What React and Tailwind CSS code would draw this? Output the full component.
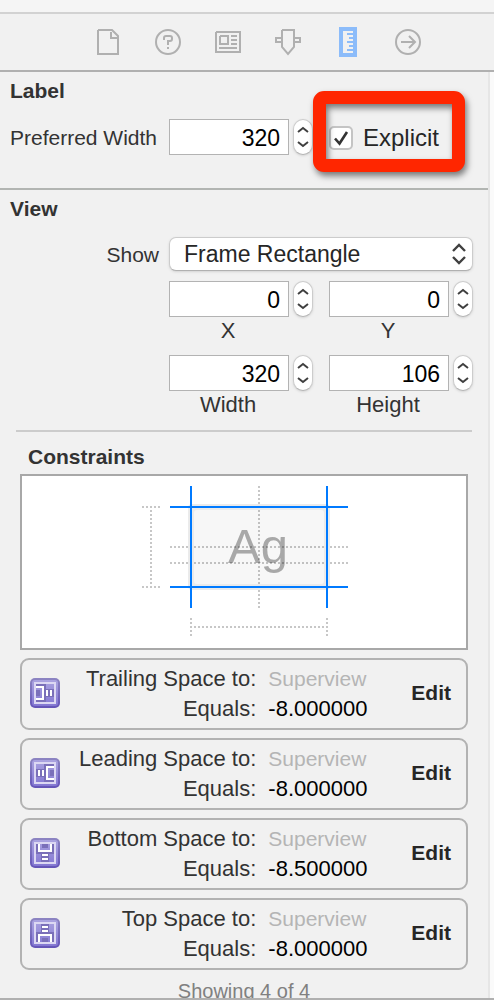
import { useState } from "react";

const toolbarItems = [
  {
    label: "File inspector",
    drawing: (
      <path d="M5 3h14l6 6v18H5V3M18 5v6h6" />
    ),
  },
  {
    label: "Quick help",
    drawing: (
      <>
        <circle cx="15" cy="15" r="12" />
        <path d="M11 13v-2a2 2 0 0 1 2-2h4a2 2 0 0 1 2 2v1a2 2 0 0 1-2 2h-2v4M15 20v2" />
      </>
    ),
  },
  {
    label: "Identity inspector",
    drawing: (
      <path d="M3 5h24v20H3V5M7 9h8v8H7V9M18 9h6M18 13h6M18 17h6M6 21h18" />
    ),
  },
  {
    label: "Attributes inspector",
    drawing: (
      <path d="M9 3h12v17l-6 7-6-7V3M9 11H3v4h6M21 11h6v4h-6" />
    ),
  },
  {
    label: "Size inspector",
    active: true,
    drawing: (
      <>
        <rect x="6" y="0" width="18" height="30" fill="#8cbcfa" stroke="none" />
        <path
          d="M10 4h10v2h-6v2h6v2h-4v2h4v2h-6v2h6v2h-4v2h4v2h-6v2h6v2H10Z"
          fill="#f1f1f1"
          stroke="none"
        />
      </>
    ),
  },
  {
    label: "Connections inspector",
    drawing: (
      <>
        <circle cx="15" cy="15" r="12" />
        <path d="M8 15h14M16 9l6 6-6 6" />
      </>
    ),
  },
];

const constraints = [
  { name: "Trailing Space to:", value: "-8.000000", angle: 0 },
  { name: "Leading Space to:", value: "-8.000000", angle: 180 },
  { name: "Bottom Space to:", value: "-8.500000", angle: 90 },
  { name: "Top Space to:", value: "-8.000000", angle: 270 },
];

function Stepper({ label, onStep }) {
  return (
    <div className="flex h-9 w-5 shrink-0 flex-col overflow-hidden rounded-full border border-[#cccccc] border-b-[#b4b4b4] bg-white shadow-sm">
      <button
        type="button"
        aria-label={`Increase ${label}`}
        onClick={() => onStep(1)}
        className="flex flex-1 items-center justify-center pt-0.5"
      >
        <svg width="12" height="7" viewBox="0 0 12 7" fill="none" stroke="#404040" strokeWidth="2">
          <path d="M1 6l5-4 5 4" />
        </svg>
      </button>
      <button
        type="button"
        aria-label={`Decrease ${label}`}
        onClick={() => onStep(-1)}
        className="flex flex-1 items-center justify-center pb-0.5"
      >
        <svg width="12" height="7" viewBox="0 0 12 7" fill="none" stroke="#404040" strokeWidth="2">
          <path d="M1 1l5 4 5-4" />
        </svg>
      </button>
    </div>
  );
}

function NumberField({ id, label, initial, caption }) {
  const [value, setValue] = useState(initial);
  return (
    <div className="min-w-0 flex-1">
      <div className="flex gap-1">
        <input
          id={id}
          type="text"
          inputMode="numeric"
          value={value}
          onChange={(e) => setValue(e.target.value)}
          className="h-9 w-full min-w-0 flex-1 border border-[#b3b3b3] bg-white px-2 pt-0.5 text-right text-[23px] text-black outline-none"
        />
        <Stepper label={label} onStep={(d) => setValue(String(Number(value) + d))} />
      </div>
      {caption && (
        <label htmlFor={id} className="mr-[26px] block pt-0.5 text-center text-[22px] leading-6">
          {caption}
        </label>
      )}
    </div>
  );
}

function ConstraintIcon({ angle }) {
  return (
    <svg width="30" height="30" viewBox="0 0 30 30" className="shrink-0" aria-hidden="true">
      <defs>
        <linearGradient id={`edge${angle}`} x1="0" y1="0" x2="0" y2="1">
          <stop offset="0" stopColor="#8d85c2" />
          <stop offset="1" stopColor="#6454b8" />
        </linearGradient>
        <linearGradient id={`face${angle}`} x1="0" y1="0" x2="0" y2="1">
          <stop offset="0" stopColor="#aaa3e0" />
          <stop offset="1" stopColor="#8377d2" />
        </linearGradient>
      </defs>
      <rect width="30" height="30" rx="5" fill={`url(#edge${angle})`} />
      <rect x="2" y="2" width="26" height="26" rx="3" fill={`url(#face${angle})`} />
      <rect x="5" y="5" width="20" height="20" fill="none" stroke="#dcd8f3" strokeWidth="2" />
      <g transform={`rotate(${angle} 15 15)`}>
        <path d="M6 6h10v5h8v8h-8v5H6v-4h6V10H6Z" fill="#7a6fb9" />
        <path d="M6 12h4v6H6Z" fill="#7a6fb9" />
        <path d="M6 8h8v14H6v-2h6V10H6ZM16 12h2v6h-2ZM20 12h2v6h-2Z" fill="#ffffff" />
      </g>
    </svg>
  );
}

function LayoutDiagram() {
  return (
    <svg
      width="208"
      height="150"
      viewBox="140 486 208 150"
      className="mx-auto block"
      role="img"
      aria-label="Constraint diagram"
    >
      <rect x="188" y="504" width="142" height="86" rx="4" fill="#ebebeb" />
      <rect x="194" y="510" width="130" height="74" rx="3" fill="#f7f7f7" />
      <text
        x="258"
        y="563"
        textAnchor="middle"
        fontSize="49"
        fill="#a8a8a8"
        fontFamily="Liberation Sans, Arial, sans-serif"
      >
        Ag
      </text>
      <path
        d="M259 486v122M170 547h178M170 563h178M142 507h18M142 587h18M151 510v76M191 618v18M327 618v18M194 627h132"
        stroke="#000000"
        strokeOpacity="0.22"
        strokeWidth="2"
        strokeDasharray="2 2"
        fill="none"
      />
      <path d="M191 486v122M327 486v122M170 507h178M170 587h178" stroke="#007aff" strokeWidth="2" />
    </svg>
  );
}

function ConstraintCard({ name, value, angle }) {
  return (
    <li className="flex h-[72px] items-center rounded-[9px] border-2 border-[#b2b2b2] pr-[15px] pb-0.5 pl-2">
      <ConstraintIcon angle={angle} />
      <dl className="grid flex-1 grid-cols-[1fr_auto] gap-x-3 pt-0.5 text-[22px] leading-[30px]">
        <dt className="text-right">{name}</dt>
        <dd className="w-[103px] text-[21px] text-[#b5b5b5]">Superview</dd>
        <dt className="text-right">Equals:</dt>
        <dd className="w-[103px] text-black">{value}</dd>
      </dl>
      <button type="button" className="ml-10 font-bold text-[#262626]">
        Edit
      </button>
    </li>
  );
}

export default function App() {
  const [explicit, setExplicit] = useState(true);
  return (
    <div className="min-h-screen bg-white font-['Liberation_Sans',Arial,sans-serif] text-[21px] leading-6 text-[#333333]">
      <div className="h-3 bg-[#f5f5f5]" />
      <nav className="flex justify-center border-t-2 border-b-2 border-t-[#d2d2d2] border-b-[#b0b0b0] bg-[#f1f1f1] pl-[22px]">
        {toolbarItems.map((item) => (
          <button
            key={item.label}
            type="button"
            aria-label={item.label}
            aria-pressed={Boolean(item.active)}
            className="flex h-14 w-[60px] items-center justify-center"
          >
            <svg width="30" height="30" viewBox="0 0 30 30" fill="none" stroke="#b0b0b0" strokeWidth="2">
              {item.drawing}
            </svg>
          </button>
        ))}
      </nav>

      <div className="border-b-2 border-[#b0b0b0] bg-[#fafafa] pr-1">
        <main className="border-r-2 border-[#e6e6e6] bg-[#f1f1f1]">
          <section className="h-[118px] border-b-2 border-[#b2b5b2] pt-[7px] pr-[15px] pl-[10px]">
            <h2 className="font-bold">Label</h2>
            <div className="mt-4 flex items-center">
              <label htmlFor="preferred" className="mr-[10px] w-[149px] pt-0.5 whitespace-nowrap">
                Preferred Width
              </label>
              <div className="flex flex-1 gap-4">
                <NumberField id="preferred" label="Preferred Width" initial="320" />
                <div className="relative flex min-w-0 flex-1 items-center">
                  <label className="flex items-center gap-[10px] pt-0.5 text-[24px] text-[#262626]">
                    <span className="relative flex size-6">
                      <input
                        type="checkbox"
                        checked={explicit}
                        onChange={(e) => setExplicit(e.target.checked)}
                        className="size-6 appearance-none rounded-[5px] border-2 border-[#c4c4c4] bg-white"
                      />
                      {explicit && (
                        <svg
                          className="pointer-events-none absolute inset-0"
                          width="24"
                          height="24"
                          viewBox="0 0 24 24"
                          fill="none"
                          stroke="#333333"
                          strokeWidth="2.6"
                        >
                          <path d="M6 12.500l4.500 5L18 6" />
                        </svg>
                      )}
                    </span>
                    Explicit
                  </label>
                  <div className="pointer-events-none absolute -top-7 right-2 -bottom-[17px] -left-4 rounded-[11px] border-[13px] border-[#ff2600] drop-shadow-[2px_4px_3px_rgba(0,0,0,0.5)]" />
                </div>
              </div>
            </div>
          </section>

          <section className="pt-[7px] pr-[15px] pl-[10px]">
            <h2 className="font-bold">View</h2>
            <div className="mt-4 flex items-center">
              <label htmlFor="show" className="mr-[10px] w-[149px] pt-0.5 text-right">
                Show
              </label>
              <div className="relative flex-1">
                <select
                  id="show"
                  className="block h-[34px] w-full appearance-none rounded-[7px] border border-[#cccccc] border-b-[#b0b0b0] bg-white pr-8 pl-[14px] text-[23px] leading-8 text-[#262626] shadow-sm"
                >
                  <option>Frame Rectangle</option>
                  <option>Alignment Rectangle</option>
                </select>
                <svg
                  className="pointer-events-none absolute top-[6px] right-[7px]"
                  width="14"
                  height="22"
                  viewBox="0 0 14 22"
                  fill="none"
                  stroke="#404040"
                  strokeWidth="2.4"
                >
                  <path d="M1 8l6-6 6 6M1 14l6 6 6-6" />
                </svg>
              </div>
            </div>
            <div className="mt-[10px] flex flex-col gap-3 pl-[159px]">
              <div className="flex gap-4">
                <NumberField id="x" label="X" initial="0" caption="X" />
                <NumberField id="y" label="Y" initial="0" caption="Y" />
              </div>
              <div className="flex gap-4">
                <NumberField id="width" label="Width" initial="320" caption="Width" />
                <NumberField id="height" label="Height" initial="106" caption="Height" />
              </div>
            </div>
          </section>

          <hr className="mx-4 mt-[13px] border-t-2 border-[#cccccc]" />

          <section className="px-5 pt-[13px]">
            <h3 className="pl-2 font-bold">Constraints</h3>
            <div className="mt-[5px] border-2 border-[#a8a8a8] bg-white pt-[10px] pb-3">
              <LayoutDiagram />
            </div>
            <ul className="mt-2 flex flex-col gap-2">
              {constraints.map((item) => (
                <ConstraintCard key={item.name} {...item} />
              ))}
            </ul>
            <p className="h-7 overflow-hidden pt-[9px] text-center text-[20px] text-[#808080]">
              Showing 4 of 4
            </p>
          </section>
        </main>
      </div>
    </div>
  );
}
